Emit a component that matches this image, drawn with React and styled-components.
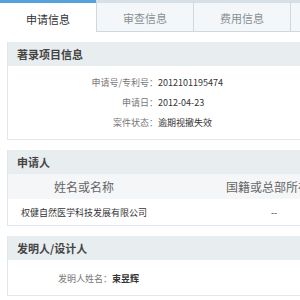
import React from 'react';
import styled, { createGlobalStyle } from 'styled-components';

const GlobalStyle = createGlobalStyle`
  html, body {
    margin: 0;
    padding: 0;
    background: #fff;
    overflow: hidden;
  }
  body {
    font-family: "Noto Sans CJK SC", "Liberation Sans", sans-serif;
    color: #333;
  }
`;

const Page = styled.div`
  width: 800px;
`;

const TabBar = styled.div`
  display: flex;
  height: 32px;
`;

const Tab = styled.div`
  box-sizing: border-box;
  display: flex;
  align-items: center;
  justify-content: center;
  font-size: 11px;
  padding-top: 2px;
  color: ${props => (props.active ? '#333' : '#8a8f93')};
  background: ${props => (props.active ? '#fff' : '#f3f7f9')};
  border-top: 3px solid ${props => (props.active ? '#56a2dd' : '#d6e0e6')};
  border-left: ${props => (props.active ? 'none' : '1px solid #cdd8df')};
  border-bottom: ${props => (props.active ? 'none' : '1px solid #cdd8df')};
  width: ${props => (props.active ? '96px' : '97px')};
`;

const Content = styled.div`
  padding: 10px 0 0 7px;
  display: flex;
  flex-direction: column;
  gap: 10px;
`;

const Section = styled.section`
  border: 1px solid #e1e7eb;
  border-top: none;
  background: #fff;
`;

const SectionTitle = styled.div`
  height: 24px;
  background: #e8edf0;
  display: flex;
  align-items: center;
  padding-left: 9px;
  font-size: 11px;
  font-weight: bold;
  color: #444;
`;

const Fields = styled.div`
  padding: ${props => props.pad || '6px 0 7px'};
  display: grid;
  grid-template-columns: ${props => props.labelWidth}px 1fr;
  grid-auto-rows: 20px;
  align-items: center;
  font-size: 9px;
`;

const Label = styled.div`
  text-align: right;
  color: #777;
`;

const Value = styled.div`
  color: #333;
  font-weight: ${props => (props.bold ? 'bold' : 'normal')};
`;

const TableHead = styled.div`
  display: grid;
  grid-template-columns: 152px 228px 1fr;
  height: 25px;
  align-items: center;
  background: #f4f6f8;
  font-size: 12px;
  color: #666;
  text-align: center;
`;

const TableRow = styled.div`
  display: grid;
  grid-template-columns: 152px 228px 1fr;
  height: 26px;
  align-items: center;
  font-size: 9px;
  color: #333;
  text-align: center;
`;

export default function App() {
  return (
    <Page>
      <GlobalStyle />
      <TabBar>
        <Tab active>申请信息</Tab>
        <Tab>审查信息</Tab>
        <Tab>费用信息</Tab>
        <Tab />
      </TabBar>
      <Content>
        <Section>
          <SectionTitle>著录项目信息</SectionTitle>
          <Fields labelWidth={150}>
            <Label>申请号/专利号：</Label>
            <Value>2012101195474</Value>
            <Label>申请日：</Label>
            <Value>2012-04-23</Value>
            <Label>案件状态：</Label>
            <Value>逾期视撤失效</Value>
          </Fields>
        </Section>
        <Section>
          <SectionTitle>申请人</SectionTitle>
          <TableHead>
            <div>姓名或名称</div>
            <div>国籍或总部所在地</div>
            <div />
          </TableHead>
          <TableRow>
            <div>权健自然医学科技发展有限公司</div>
            <div>--</div>
            <div />
          </TableRow>
        </Section>
        <Section>
          <SectionTitle>发明人/设计人</SectionTitle>
          <Fields labelWidth={104} pad="8px 0 7px">
            <Label>发明人姓名：</Label>
            <Value bold>束昱辉</Value>
          </Fields>
        </Section>
      </Content>
    </Page>
  );
}
